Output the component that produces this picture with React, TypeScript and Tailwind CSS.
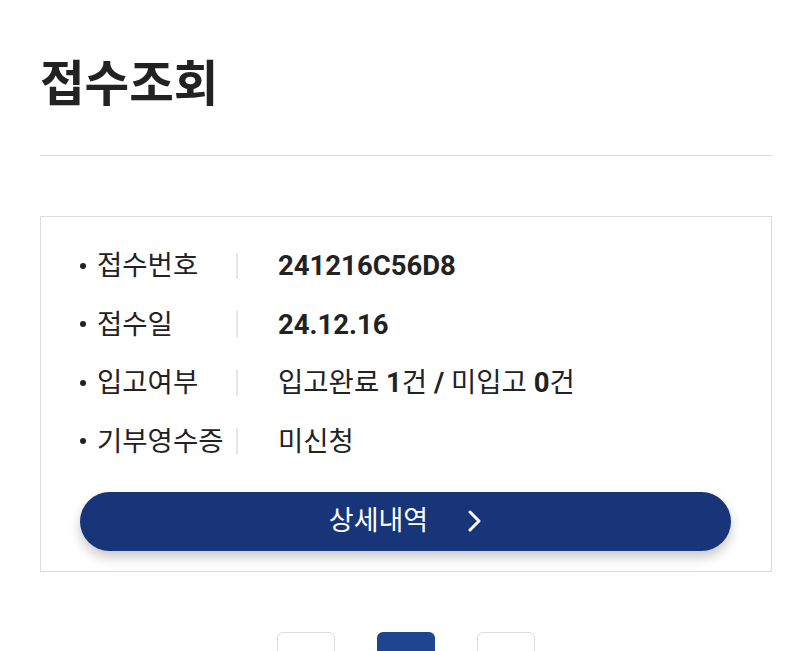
import { ChevronLeft, ChevronRight } from 'lucide-react';

const rows: { label: string; value: React.ReactNode }[] = [
  { label: '접수번호', value: <span className="font-bold">241216C56D8</span> },
  { label: '접수일', value: <span className="font-bold">24.12.16</span> },
  {
    label: '입고여부',
    value: (
      <span>
        입고완료 <b className="font-bold">1</b>건 <b className="font-bold">/</b> 미입고 <b className="font-bold">0</b>건
      </span>
    ),
  },
  { label: '기부영수증', value: <span>미신청</span> },
];

export default function App() {
  return (
    <div className="min-h-screen bg-white pl-10 pr-[38px] text-[#222] [font-family:Roboto,'Noto_Sans_CJK_KR',sans-serif]">
      <h1 className="pt-[61px] pb-[45px] text-[48.5px] font-bold leading-none">접수조회</h1>
      <div className="h-px bg-[#dcdcdc]" />

      <div className="mt-[60px] border border-[#dcdcdc] pl-[39px] pr-10 pt-[20px] pb-[20px]">
        {rows.map((r) => (
          <div key={r.label} className="flex h-[58.5px] items-center">
            <div className="flex w-[156px] items-center">
              <span className="mr-[11px] h-[6px] w-[6px] rounded-full bg-[#222]" />
              <span className="text-[27.5px]">{r.label}</span>
            </div>
            <div className="h-[26px] w-[2px] bg-[#e6e6e6]" />
            <div className="pl-[40px] text-[27.5px]">{r.value}</div>
          </div>
        ))}

        <button className="mt-[21px] flex h-[59px] w-full items-center justify-center rounded-full bg-[#18357a] text-white shadow-[0_6px_12px_rgba(0,0,0,0.22)]">
          <span className="text-[27px]">상세내역</span>
          <svg className="ml-[40px]" width="14" height="22" viewBox="0 0 14 22" fill="none">
            <polyline points="2,2 11,11 2,20" stroke="currentColor" strokeWidth="3" strokeLinecap="round" strokeLinejoin="round" />
          </svg>
        </button>
      </div>

      <div className="mt-[60px] flex justify-center gap-[42px]">
        <button className="flex h-[58px] w-[58px] items-center justify-center rounded-md border border-[#dcdcdc] bg-white text-[#999]">
          <ChevronLeft className="h-5 w-5" />
        </button>
        <button className="flex h-[58px] w-[58px] items-center justify-center rounded-md bg-[#1f4490] text-[20px] text-white">
          1
        </button>
        <button className="flex h-[58px] w-[58px] items-center justify-center rounded-md border border-[#dcdcdc] bg-white text-[#999]">
          <ChevronRight className="h-5 w-5" />
        </button>
      </div>
    </div>
  );
}
